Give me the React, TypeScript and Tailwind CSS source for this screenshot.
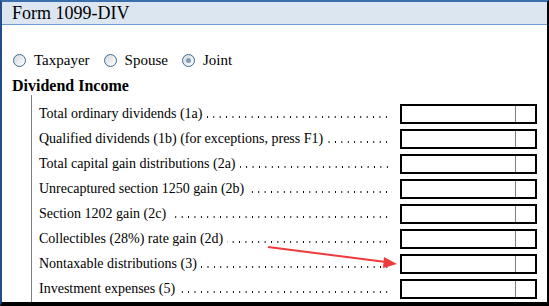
import React from 'react'

const rows = [
  'Total ordinary dividends (1a)',
  'Qualified dividends (1b) (for exceptions, press F1)',
  'Total capital gain distributions (2a)',
  'Unrecaptured section 1250 gain (2b)',
  'Section 1202 gain (2c)',
  'Collectibles (28%) rate gain (2d)',
  'Nontaxable distributions (3)',
  'Investment expenses (5)',
]

const Radio = ({ checked = false }: { checked?: boolean }) => (
  <span className="relative inline-flex h-[13px] w-[13px] items-center justify-center rounded-full border border-[#3d6b97] bg-gradient-to-br from-[#d4d8dc] to-[#ffffff]">
    {checked && <span className="h-[5px] w-[5px] rounded-full bg-[#7f9cbd]" />}
  </span>
)

const Row = ({ label }: { label: string }) => (
  <div className="flex h-[25px] items-center">
    <span className="whitespace-nowrap">{label}</span>
    <div className="mb-[-6px] ml-[4px] h-[4px] flex-1 bg-[radial-gradient(circle,#000_0.6px,transparent_1px)] bg-[length:6.4px_4px] bg-right" />
    <div className="ml-[10px] flex h-[20px] w-[137px] border-2 border-black">
      <div className="flex-1 border-r border-[#808080]" />
      <div className="w-[19px]" />
    </div>
  </div>
)

export default function App() {
  return (
    <div className="relative h-[306px] w-[549px] overflow-hidden bg-white font-['Liberation_Serif',serif] text-black">
      <div className="flex h-full flex-col border-b-4 border-l-2 border-r-2 border-t-2 border-b-black border-l-[#1f4f86] border-r-black border-t-[#3a6fae]">
        <div className="flex h-[23px] shrink-0 items-center border-b border-[#6f9fd0] bg-[#dce6f1] pl-[10px] text-[18px]">
          Form 1099-DIV
        </div>

        <div className="mt-[27px] flex h-[16px] shrink-0 items-center gap-[6px] pl-[11px] text-[15px]">
          <label className="flex items-center gap-[8px]">
            <Radio />
            <span>Taxpayer</span>
          </label>
          <label className="ml-[8px] flex items-center gap-[8px]">
            <Radio />
            <span>Spouse</span>
          </label>
          <label className="ml-[8px] flex items-center gap-[8px]">
            <Radio checked />
            <span>Joint</span>
          </label>
        </div>

        <div className="mt-[9px] flex h-[18px] shrink-0 items-center pl-[10px] text-[16px] font-bold">
          Dividend Income
        </div>

        <div className="ml-[29px] flex-1 border-l border-[#808080] pl-[7px] pr-[10px] pt-[6px] text-[14px]">
          {rows.map((r) => (
            <Row key={r} label={r} />
          ))}
        </div>
      </div>

      <svg className="pointer-events-none absolute left-0 top-0" width="549" height="306">
        <line x1="268" y1="247" x2="386" y2="262" stroke="#ee3b3b" strokeWidth="2" />
        <polygon points="397,264 384,257 383,268" fill="#ee3b3b" />
      </svg>
    </div>
  )
}
